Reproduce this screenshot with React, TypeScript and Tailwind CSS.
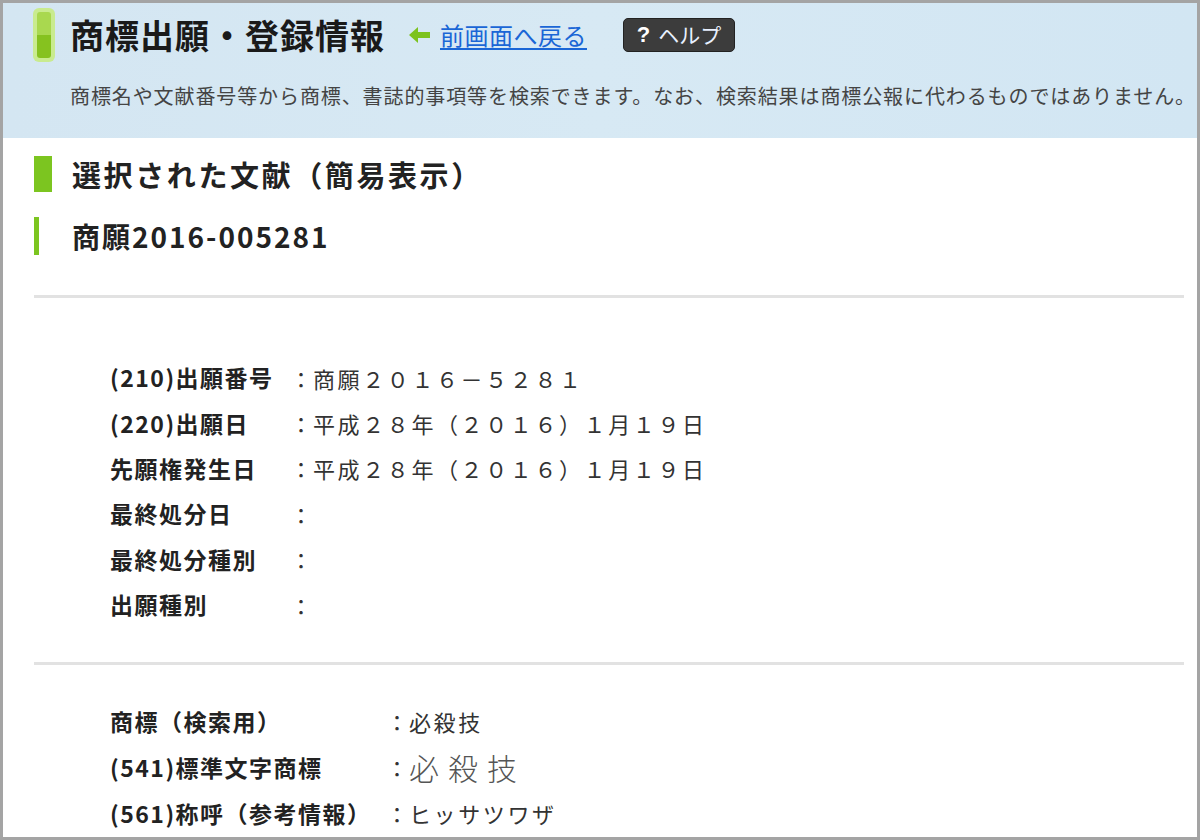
import React from "react";

const JP = { fontFamily: '"Noto Sans CJK JP", "Noto Sans", sans-serif' };

function Row({ label, value, w, h, valueClass }: { label: string; value: string; w: string; h: string; valueClass?: string }) {
  return (
    <div className={`flex ${h} items-center`}>
      <div className={`${w} shrink-0 text-[23px] font-bold text-[#222] tracking-[1.5px]`}>{label}</div>
      <div className="w-[23px] text-[22px] text-[#333]">：</div>
      <div className={valueClass ?? "text-[22px] text-[#333] tracking-[2.6px]"}>{value}</div>
    </div>
  );
}

export default function App() {
  return (
    <div className="w-[1200px] h-[840px] overflow-hidden bg-white border-[3px] border-[#a4a4a4] leading-none" style={JP}>
      <div className="h-[135px] bg-gradient-to-r from-[#d4e6f2] via-[#d7e9f4] to-[#d2e6f3]">
        <div className="flex items-center pt-[3px] h-[60px]">
          <div className="ml-[30px] w-[22px] h-[54px] rounded-[6px] bg-[#c9eb8f] p-[4px]">
            <div className="w-full h-full rounded-[3px] bg-gradient-to-b from-[#a9d84f] from-50% to-[#86c21f] to-50%"></div>
          </div>
          <div className="ml-[15px] text-[34px] font-bold text-[#1a1a1a] tracking-[1px]">商標出願・登録情報</div>
          <svg className="ml-[24px]" width="22" height="18" viewBox="0 0 22 18">
            <path d="M0 9 L9 1 L9 6 L21 6 L21 12 L9 12 L9 17 Z" fill="#7cc21e" />
          </svg>
          <a className="ml-[9px] text-[24px] text-[#1a66d6] underline underline-offset-[3px] tracking-[0.5px]">前画面へ戻る</a>
          <div className="ml-[36px] flex items-center justify-center w-[112px] h-[34px] rounded-[5px] bg-[#3c3c3c] border border-[#222]">
            <span className="text-[22px] font-bold text-white mr-[8px]" style={{ fontFamily: '"Liberation Sans", sans-serif' }}>?</span>
            <span className="text-[21px] text-[#e8f0ff]">ヘルプ</span>
          </div>
        </div>
        <div className="pl-[67px] mt-[23px] text-[20px] text-[#444] tracking-[0.9px] whitespace-nowrap">
          商標名や文献番号等から商標、書誌的事項等を検索できます。なお、検索結果は商標公報に代わるものではありません。
        </div>
      </div>

      <div className="pl-[31px] pr-[13px]">
        <div className="flex items-center mt-[18px] h-[36px]">
          <div className="w-[18px] h-[36px] bg-[#7cc520]"></div>
          <div className="ml-[20px] text-[29px] font-bold text-[#222] tracking-[2.6px]">選択された文献（簡易表示）</div>
        </div>
        <div className="flex items-center mt-[25px] h-[38px]">
          <div className="w-[5px] h-[38px] bg-[#7cc520]"></div>
          <div className="ml-[33px] text-[28px] font-bold text-[#222] tracking-[2px]">商願2016-005281</div>
        </div>
        <div className="mt-[40px] h-[3px] bg-[#e2e2e2]"></div>

        <div className="pl-[76px] mt-[57px]">
          <Row h="h-[45.4px]" w="w-[180px]" label="(210)出願番号" value="商願２０１６－５２８１" />
          <Row h="h-[45.4px]" w="w-[180px]" label="(220)出願日" value="平成２８年（２０１６）１月１９日" />
          <Row h="h-[45.4px]" w="w-[180px]" label="先願権発生日" value="平成２８年（２０１６）１月１９日" />
          <Row h="h-[45.4px]" w="w-[180px]" label="最終処分日" value="" />
          <Row h="h-[45.4px]" w="w-[180px]" label="最終処分種別" value="" />
          <Row h="h-[45.4px]" w="w-[180px]" label="出願種別" value="" />
        </div>

        <div className="mt-[35px] h-[3px] bg-[#e2e2e2]"></div>

        <div className="pl-[76px] mt-[33px]">
          <Row h="h-[46px]" w="w-[276px]" label="商標（検索用）" value="必殺技" />
          <Row h="h-[46px]" w="w-[276px]" label="(541)標準文字商標" value="必殺技" valueClass="text-[30px] text-[#555] font-light tracking-[9px]" />
          <Row h="h-[46px]" w="w-[276px]" label="(561)称呼（参考情報）" value="ヒッサツワザ" />
        </div>
      </div>
    </div>
  );
}
